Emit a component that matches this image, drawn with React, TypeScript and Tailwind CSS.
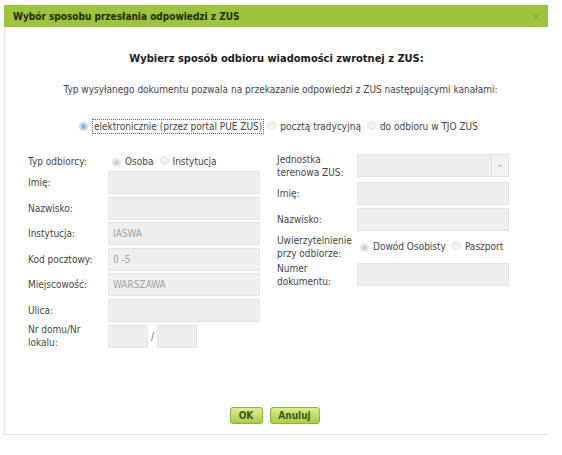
import React from 'react';

const font = { fontFamily: '"DejaVu Sans Condensed", "DejaVu Sans", sans-serif' };

function Radio({ checked = false, active = false }: { checked?: boolean; active?: boolean }) {
  if (active) {
    return (
      <span className="inline-flex h-[9px] w-[9px] items-center justify-center rounded-full border border-[#b7c9e0] bg-[#e3ecf7]">
        <span className="h-[5px] w-[5px] rounded-full bg-[#8fb0d8]" />
      </span>
    );
  }
  return (
    <span className="inline-flex h-[9px] w-[9px] items-center justify-center rounded-full border border-[#e2e2e2] bg-[#f2f2f2]">
      {checked && <span className="h-[5px] w-[5px] rounded-full bg-[#d0d0d0]" />}
    </span>
  );
}

function Field({ value, className = 'w-[152px]' }: { value?: string; className?: string }) {
  return (
    <div className={`flex h-[23px] items-center border border-[#e4e4e4] bg-[#efefef] px-[4px] text-[10px] text-[#a0a0a0] ${className}`}>
      {value}
    </div>
  );
}

function Row({ label, children, labelClass = 'w-[80px]' }: { label: React.ReactNode; children: React.ReactNode; labelClass?: string }) {
  return (
    <div className="flex items-center">
      <div className={`text-[10px] leading-[13px] text-[#444] ${labelClass}`}>{label}</div>
      {children}
    </div>
  );
}

export default function App() {
  return (
    <div className="h-[455px] w-[562px] bg-white" style={font}>
      <div className="ml-[4px] pt-[5px] w-[544px]">
        <div className="flex h-[22px] items-center justify-between bg-[#9dc43c] pl-[9px] pr-[8px]">
          <span className="text-[10px] font-bold text-[#1f2a0a]">Wybór sposobu przesłania odpowiedzi z ZUS</span>
          <span className="text-[10px] text-[#7f9a3a]">×</span>
        </div>

        <div className="h-[408px] border-l border-b border-[#e2e2e2]">
          <h2 className="pt-[24px] text-center text-[11px] font-bold text-[#1a1a1a]">
            Wybierz sposób odbioru wiadomości zwrotnej z ZUS:
          </h2>
          <p className="mt-[14px] pl-[8px] text-center text-[10px] text-[#444]">
            Typ wysyłanego dokumentu pozwala na przekazanie odpowiedzi z ZUS następującymi kanałami:
          </p>

          <div className="mt-[22px] flex items-center pl-[74px] text-[10px] text-[#444]">
            <Radio active />
            <span className="ml-[4px] border border-dotted border-[#666] px-[1px] leading-[13px]">elektronicznie (przez portal PUE ZUS)</span>
            <span className="ml-[3px]"><Radio /></span>
            <span className="ml-[4px]">pocztą tradycyjną</span>
            <span className="ml-[6px]"><Radio /></span>
            <span className="ml-[4px]">do odbioru w TJO ZUS</span>
          </div>

          <div className="mt-[20px] flex">
            <div className="ml-[23px] flex w-[232px] flex-col gap-[2.5px]">
              <Row label="Typ odbiorcy:">
                <div className="flex items-center text-[10px] text-[#444]">
                  <span className="ml-[4px]"><Radio checked /></span>
                  <span className="ml-[4px]">Osoba</span>
                  <span className="ml-[6px]"><Radio /></span>
                  <span className="ml-[4px]">Instytucja</span>
                </div>
              </Row>
              <Row label="Imię:"><Field /></Row>
              <Row label="Nazwisko:"><Field /></Row>
              <Row label="Instytucja:"><Field value="IASWA" /></Row>
              <Row label="Kod pocztowy:"><Field value="0 -5" /></Row>
              <Row label="Miejscowość:"><Field value="WARSZAWA" /></Row>
              <Row label="Ulica:"><Field /></Row>
              <div className="-mt-[1px]">
                <Row label={<>Nr domu/Nr<br />lokalu:</>}>
                  <div className="flex items-center">
                    <Field className="w-[40px]" />
                    <span className="mx-[3px] text-[10px] text-[#666]">/</span>
                    <Field className="w-[40px]" />
                  </div>
                </Row>
              </div>
            </div>

            <div className="ml-[17px] -mt-[1px] flex w-[232px] flex-col">
              <Row label={<>Jednostka<br />terenowa ZUS:</>}>
                <div className="flex h-[23px] w-[152px] border border-[#e4e4e4] bg-[#efefef]">
                  <div className="flex-1" />
                  <div className="flex w-[17px] items-center justify-center border-l border-[#e4e4e4] bg-[#f3f3f3]">
                    <span className="h-0 w-0 border-x-[2px] border-t-[2px] border-x-transparent border-t-[#aaa]" />
                  </div>
                </div>
              </Row>
              <div className="mt-[3px]"><Row label="Imię:"><Field /></Row></div>
              <div className="mt-[3px]"><Row label="Nazwisko:"><Field /></Row></div>
              <div className="mt-[3px] h-[26px]">
                <Row label={<>Uwierzytelnienie<br />przy odbiorze:</>}>
                  <div className="flex items-center text-[10px] text-[#444]">
                    <span className="ml-[3px]"><Radio checked /></span>
                    <span className="ml-[4px]">Dowód Osobisty</span>
                    <span className="ml-[6px]"><Radio /></span>
                    <span className="ml-[4px]">Paszport</span>
                  </div>
                </Row>
              </div>
              <div className="mt-[2px]"><Row label={<>Numer<br />dokumentu:</>}><Field /></Row></div>
            </div>
          </div>

          <div className="mt-[58px] flex justify-center gap-[7px] pr-[4px]">
            <button className="h-[17px] w-[33px] rounded-[3px] border border-[#8fae3c] bg-gradient-to-b from-[#d9ef8f] to-[#a9cd48] text-[10px] font-bold text-[#3b5512]">OK</button>
            <button className="h-[17px] w-[50px] rounded-[3px] border border-[#8fae3c] bg-gradient-to-b from-[#d9ef8f] to-[#a9cd48] text-[10px] font-bold text-[#3b5512]">Anuluj</button>
          </div>
        </div>
      </div>
    </div>
  );
}
